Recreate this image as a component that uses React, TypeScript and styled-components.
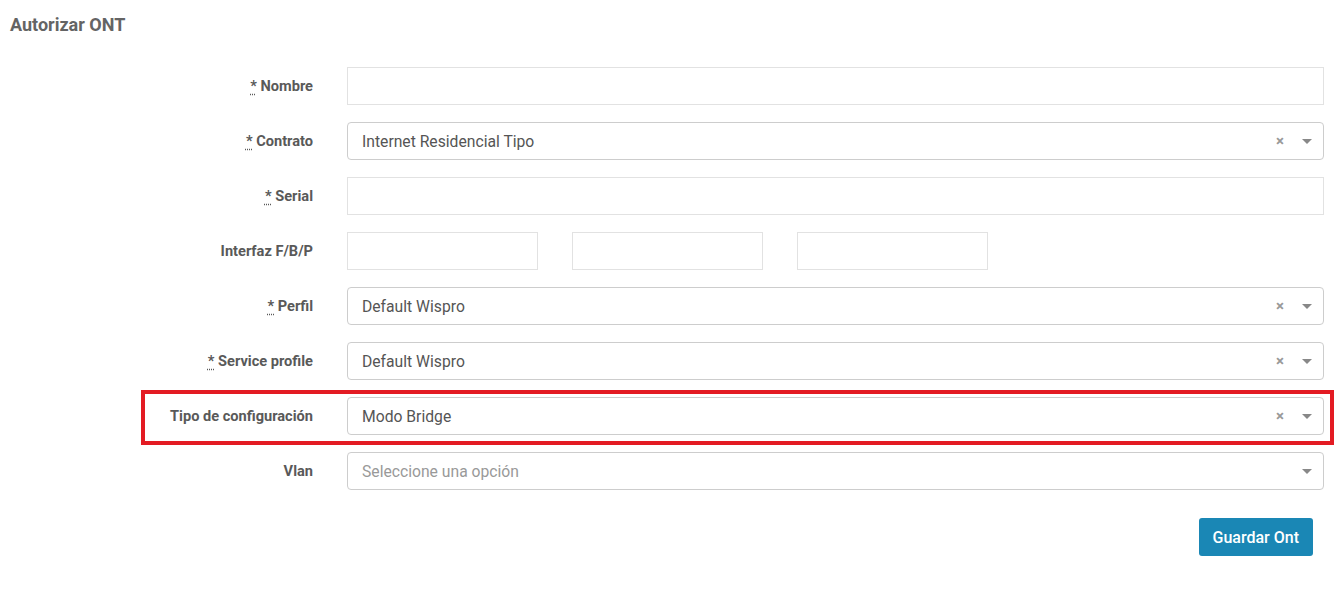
import styled, { createGlobalStyle } from "styled-components";

const GlobalStyle = createGlobalStyle`
  html, body {
    margin: 0;
    padding: 0;
    background: #fff;
    font-family: Roboto, "Liberation Sans", Arial, sans-serif;
  }
`;

const Page = styled.div`
  width: 1338px;
  height: 592px;
  box-sizing: border-box;
  padding: 15px 14px 0 10px;
`;

const Title = styled.h3`
  margin: 0;
  font-size: 18px;
  line-height: 20px;
  font-weight: 700;
  color: #646464;
`;

const Form = styled.form`
  display: flex;
  flex-direction: column;
  gap: 17px;
  margin-top: 32px;
`;

const Row = styled.div<{ $highlight?: boolean }>`
  position: relative;
  display: grid;
  grid-template-columns: 303px 1fr;
  column-gap: 34px;
  align-items: center;

  ${(p) =>
    p.$highlight &&
    `
    &::before {
      content: "";
      position: absolute;
      left: 131px;
      right: -10px;
      top: -7px;
      bottom: -10px;
      border: 4px solid #e31b23;
      pointer-events: none;
    }
  `}
`;

const Label = styled.label`
  text-align: right;
  font-size: 14.6px;
  font-weight: 700;
  color: #595959;
`;

const Req = styled.abbr`
  text-decoration: underline dotted;
  text-underline-offset: 3px;
  cursor: help;
`;

const TextInput = styled.input<{ $width?: string }>`
  box-sizing: border-box;
  width: ${(p) => p.$width || "100%"};
  height: 38px;
  border: 1px solid #e2e2e2;
  border-radius: 0;
  padding: 0 14px;
  font-family: inherit;
  font-size: 16px;
  color: #555;
  outline: none;
`;

const Group = styled.div`
  display: flex;
  gap: 34px;
`;

const Select = styled.div`
  box-sizing: border-box;
  height: 38px;
  border: 1px solid #cdcdcd;
  border-radius: 4px;
  display: flex;
  align-items: center;
  padding: 0 14px;
`;

const Value = styled.span<{ $placeholder?: boolean }>`
  flex: 1;
  font-size: 15.7px;
  color: ${(p) => (p.$placeholder ? "#999" : "#555")};
`;

const Clear = styled.span`
  font-size: 15px;
  color: #999;
  font-weight: 700;
  margin-right: 18px;
`;

const Arrow = styled.span`
  width: 0;
  height: 0;
  border-left: 5px solid transparent;
  border-right: 5px solid transparent;
  border-top: 5px solid #888;
  margin-right: -3px;
`;

const Footer = styled.div`
  display: flex;
  justify-content: flex-end;
  padding-right: 11px;
  margin-top: 28px;
`;

const Button = styled.button`
  height: 38px;
  padding: 0 14px;
  background: #1a87b5;
  border: none;
  border-radius: 3px;
  color: #fff;
  font-family: inherit;
  font-size: 16px;
  font-weight: 500;
`;

const Required = ({ children }: { children: string }) => (
  <>
    <Req title="requerido">*</Req> {children}
  </>
);

const SelectBox = ({ value, placeholder, clearable = true }: { value?: string; placeholder?: string; clearable?: boolean }) => (
  <Select>
    <Value $placeholder={!value}>{value || placeholder}</Value>
    {clearable && <Clear>×</Clear>}
    <Arrow />
  </Select>
);

export default function App() {
  return (
    <Page>
      <GlobalStyle />
      <Title>Autorizar ONT</Title>
      <Form>
        <Row>
          <Label><Required>Nombre</Required></Label>
          <TextInput />
        </Row>
        <Row>
          <Label><Required>Contrato</Required></Label>
          <SelectBox value="Internet Residencial Tipo" />
        </Row>
        <Row>
          <Label><Required>Serial</Required></Label>
          <TextInput />
        </Row>
        <Row>
          <Label>Interfaz F/B/P</Label>
          <Group>
            <TextInput $width="191px" />
            <TextInput $width="191px" />
            <TextInput $width="191px" />
          </Group>
        </Row>
        <Row>
          <Label><Required>Perfil</Required></Label>
          <SelectBox value="Default Wispro" />
        </Row>
        <Row>
          <Label><Required>Service profile</Required></Label>
          <SelectBox value="Default Wispro" />
        </Row>
        <Row $highlight>
          <Label>Tipo de configuración</Label>
          <SelectBox value="Modo Bridge" />
        </Row>
        <Row>
          <Label>Vlan</Label>
          <SelectBox placeholder="Seleccione una opción" clearable={false} />
        </Row>
      </Form>
      <Footer>
        <Button type="button">Guardar Ont</Button>
      </Footer>
    </Page>
  );
}
